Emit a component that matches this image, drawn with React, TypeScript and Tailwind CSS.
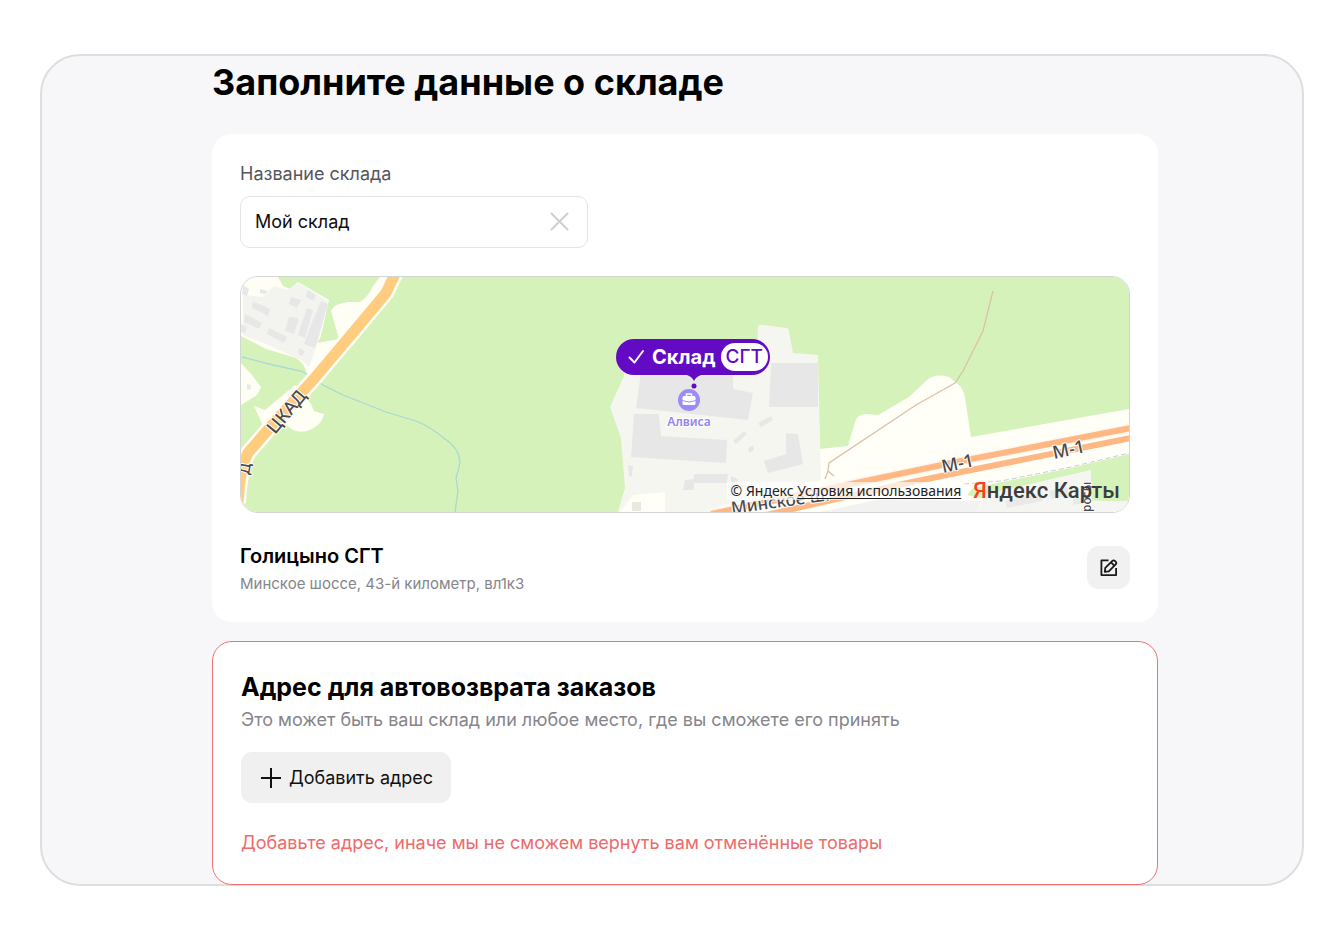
import { useState } from "react";

const roadLabel = "fill-[#4a4a4a] font-['Noto_Sans'] font-medium";

function MapTiles() {
  return (
    <svg
      aria-hidden
      viewBox="0 0 888 235"
      preserveAspectRatio="xMidYMid slice"
      className="block h-full w-full"
    >
      <rect width="888" height="235" fill="#d5f2ba" />

      {/* settlement in the north-west */}
      <path d="M0 0H37L42 9L49 12L57 5L88 23L80 60L76 66L98 62L90 34Q92 29 98 27L107 25H119Q127 20 132 9L139 0H154L76 104L66 99Q64 84 52 80L25 72L0 59Z" fill="#fefef5" />
      <path d="M90 34V60L79 63L88 24Z" fill="#d5f2ba" />
      <path d="M33 9L47 13L57 6L87 24L78 62L68 90L60 83L20 65L2 58V18L22 20Z" fill="#f3f4f0" />
      <g fill="#e7e7e7">
        <path d="M80 24L87 27L74 71L63 67L70 48Z" />
        <path d="M66 31L72 33L64 61L57 58Z" />
        <path d="M12 24L29 32L27 39L11 31Z" />
        <path d="M4 37L21 46L18 52L3 45Z" />
        <path d="M50 20L60 23L56 31L48 27Z" />
        <path d="M48 40L58 41L53 57L44 54Z" />
        <path d="M28 51L46 60L43 66L26 57Z" />
        <path d="M67 13L75 18L72 24L65 20Z" />
        <path d="M2 8L8 12L6 19L1 17Z" />
        <path d="M19 12L27 14L24 17L19 16Z" />
        <path d="M0 47L6 50L4 56L0 55Z" />
        <path d="M58 71L64 74L61 79L57 77Z" />
      </g>
      <path d="M0 86L11 98L20 110L16 118L0 128Z" fill="#fefef5" />
      <path d="M6 107L10 108L9 113L6 112Z" fill="#e7e7e7" />
      <path d="M13 129L24 133L54 108L70 127L73 134L83 137Q81 147 71 152Q62 157 52 153L38 143L22 149L18 140Z" fill="#fefef5" />

      {/* river */}
      <path d="M1 80L32 88L60 94L72 100L82 108L102 118L145 135L175 144Q190 150 204 162Q218 171 219 185Q218 192 215 201L217 214L214 235" fill="none" stroke="#a9d8d6" strokeWidth="1.3" />

      {/* ring road */}
      <path d="M154 -3L145 16L115 52L72 103L32 147L7 176Q-1 190 -3 226" fill="none" stroke="#fefef5" strokeWidth="16" />
      <path d="M154 -3L145 16L115 52L72 103L32 147L7 176Q-1 190 -3 226" fill="none" stroke="#ffcc80" strokeWidth="11" />

      {/* highway verge */}
      <path d="M578 172L607 169L614 145Q617 137 624 137L637 138L668 120L686 103Q695 96 708 100L719 109Q723 114 724 121L730 160L888 132V235H480L578 200Z" fill="#fffef7" />
      <path d="M888 177L830 191L732 211L726 218L744 222L870 224H888Z" fill="#d5f2ba" />
      <path d="M745 217L850 193V224H888V235H735Z" fill="#f5f6f2" />
      <path d="M764 224L800 217L802 224L766 231ZM808 214L826 210L828 218L810 222ZM832 222L848 219L848 225L832 228Z" fill="#e9eae8" />
      <path d="M580 235L640 222L740 224L735 235Z" fill="#f1f2f1" />

      {/* industrial zone */}
      <path d="M517 50Q518 47 523 48L545 51Q548 51 548 55L552 76L577 78L580 203L478 235H377L384 211L380 161L369 130L383 99V70H516Z" fill="#f6f6f0" />
      <g fill="#e7e7e7">
        <path d="M400 95H492V112L512 116L507 143L395 131Z" />
        <path d="M393 137H418L420 159L486 163L485 186L390 180Z" />
        <path d="M530 86H577V130H528Z" />
        <path d="M545 156L557 157L562 187L527 196L523 184L545 177Z" />
        <path d="M453 197H487L486 206H453V213H442L444 203L453 202Z" />
        <path d="M517 146L530 139L532 143L520 150Z" />
        <path d="M492 164L503 154L506 157L495 167Z" />
        <path d="M507 171L512 168L513 173L509 176Z" />
        <path d="M387 188L392 189L391 200L388 199Z" />
        <path d="M490 199L497 202L495 208L490 206Z" />
      </g>
      <path d="M392 218L424 215V235H379Z" fill="#fffef7" />
      <path d="M391 225H400V234H391Z" fill="#e9e9e0" />

      {/* M-1 carriageways */}
      <path d="M890 151L720 184L610 207L470 235" fill="none" stroke="#fff8ee" strokeWidth="9" />
      <path d="M890 151L720 184L610 207L470 237" fill="none" stroke="#ffb784" strokeWidth="6" />
      <path d="M890 161L720 195L657 208L525 238" fill="none" stroke="#ffb784" strokeWidth="6" />
      <path d="M723 207L760 204L830 190L888 176" fill="none" stroke="#c5cbe4" strokeWidth="1" strokeDasharray="5 3" />

      {/* footpath */}
      <path d="M752 14L742 54L722 94L714 106L675 128L588 186L587 194L584 202M587 194L593 199" fill="none" stroke="#dcc0a8" strokeWidth="1.3" />

      <g stroke="#ffffff" strokeWidth="2" paintOrder="stroke" strokeLinejoin="round">
        <text transform="translate(34 158) rotate(-50)" fontSize="18" className={roadLabel}>ЦКАД</text>
        <text transform="translate(8 198) rotate(-80)" fontSize="15" className={roadLabel}>Д</text>
        <text transform="translate(702 196) rotate(-12)" fontSize="18" className={roadLabel}>М-1</text>
        <text transform="translate(813 182) rotate(-12)" fontSize="18" className={roadLabel}>М-1</text>
        <text transform="translate(491 237) rotate(-8)" fontSize="17" className={roadLabel}>Минское ш.</text>
        <text transform="translate(850 235) rotate(-90)" fontSize="12" className={roadLabel}>росы</text>
      </g>

      {/* point of interest */}
      <circle cx="448" cy="123" r="11" fill="#9b8cf5" />
      <rect x="441.5" y="119" width="13" height="9" rx="1.5" fill="#fff" />
      <path d="M445.5 119V117H450.5V119" fill="none" stroke="#fff" strokeWidth="1.5" />
      <path d="M441 123.5L448 125L455 123.5" fill="none" stroke="#9b8cf5" strokeWidth="1" />
      <text x="448" y="149" textAnchor="middle" fontSize="12" stroke="#fff" strokeWidth="2" paintOrder="stroke" className="fill-[#9384f0] font-['Noto_Sans'] font-semibold">
        Алвиса
      </text>
    </svg>
  );
}

function WarehousePin() {
  return (
    <button
      type="button"
      className="absolute top-[62px] left-[calc(50%-69px)] flex h-9 items-center rounded-full bg-[#620ac4] pr-[2px] pl-3 text-white"
    >
      <svg aria-hidden viewBox="0 0 18 18" className="mr-[6px] h-[18px] w-[18px]" fill="none" stroke="currentColor" strokeWidth="2" strokeLinecap="round" strokeLinejoin="round">
        <path d="M1.5 9.5L6.5 14.5L15 3" />
      </svg>
      <span className="text-[20px] leading-7 font-bold">Склад</span>
      <span className="ml-[5px] rounded-full bg-white px-[5px] text-[19px] leading-7 font-medium text-[#620ac4]">
        СГТ
      </span>
      <svg aria-hidden viewBox="0 0 20 16" className="absolute top-[35px] left-[68px] h-4 w-5" fill="#620ac4">
        <path d="M0 0H20Q12 2 10 7Q8 2 0 0Z" />
        <circle cx="10" cy="12" r="2.5" />
      </svg>
    </button>
  );
}

function WarehouseMap() {
  return (
    <div className="relative h-[237px] overflow-hidden rounded-[18px] border border-[#d3d6d3]">
      <MapTiles />
      <WarehousePin />
      <div className="absolute right-[9px] bottom-[7px] flex items-center gap-2">
        <p className="bg-white/70 px-1 font-['Noto_Sans',sans-serif] text-[14px] leading-[18px] text-[#222]">
          © Яндекс{" "}
          <a href="#terms" className="underline underline-offset-2">
            Условия использования
          </a>
        </p>
        <a href="#maps" className="font-['Roboto',sans-serif] text-[22px] leading-7 font-medium text-[#3d3d3d]">
          <span className="text-[#fc3f1d]">Я</span>ндекс Карты
        </a>
      </div>
    </div>
  );
}

function WarehouseCard() {
  const [name, setName] = useState("Мой склад");

  return (
    <section className="rounded-[20px] bg-white px-7 pt-[26px] pb-6">
      <label htmlFor="warehouse-name" className="block text-[18px] leading-7 text-[#55555c]">
        Название склада
      </label>
      <div className="mt-2 flex h-[52px] max-w-[348px] items-center rounded-[10px] border border-[#e4e4e7] pr-4 pl-[14px]">
        <input
          id="warehouse-name"
          type="text"
          value={name}
          onChange={(e) => setName(e.target.value)}
          className="min-w-0 flex-1 text-[18px] leading-7 text-[#0d0d0f] outline-none"
        />
        <button type="button" aria-label="Очистить" onClick={() => setName("")} className="text-[#cfcfd2]">
          <svg viewBox="0 0 22 22" className="h-[22px] w-[22px]" fill="none" stroke="currentColor" strokeWidth="2" strokeLinecap="round">
            <path d="M2.5 2.5L18.5 18.5M18.5 2.5L2.5 18.5" />
          </svg>
        </button>
      </div>

      <div className="mt-7">
        <WarehouseMap />
      </div>

      <div className="mt-[29px] flex items-start justify-between">
        <div>
          <h2 className="text-[20px] leading-7 font-semibold text-black">Голицыно СГТ</h2>
          <p className="text-[15px] leading-7 text-[#85858b]">Минское шоссе, 43-й километр, вл1к3</p>
        </div>
        <button
          type="button"
          aria-label="Изменить склад"
          className="mt-1 flex h-[43px] w-[43px] items-center justify-center rounded-[12px] bg-[#f1f1f2] text-[#1a1a1a]"
        >
          <svg viewBox="0 0 18 18" className="h-[18px] w-[18px]" fill="none" stroke="currentColor" strokeWidth="1.8" strokeLinejoin="round">
            <path d="M8.5 1.4H1.4V16.1H16.1V9" />
            <path d="M4.8 12.9L5.3 8.9L12.4 1.8Q13.8 .8 15.4 2.3Q17 3.800 15.900 5.200L8.800 12.300Z" />
            <path d="M11 3.400L14.300 6.700" />
          </svg>
        </button>
      </div>
    </section>
  );
}

function ReturnAddressCard() {
  return (
    <section className="-mb-px mt-[19px] rounded-[20px] border border-[#ee7272] bg-white px-7 pt-[29px] pb-[27px]">
      <h2 className="text-[25px] leading-8 font-bold text-black">Адрес для автовозврата заказов</h2>
      <p className="mt-[3px] text-[18px] leading-7 text-[#85858b]">
        Это может быть ваш склад или любое место, где вы сможете его принять
      </p>
      <button
        type="button"
        className="mt-[18px] flex h-[51px] items-center gap-2 rounded-[11px] bg-[#f0f0f0] px-[18px] text-[18px] leading-7 text-[#111]"
      >
        <svg aria-hidden viewBox="0 0 22 22" className="h-[22px] w-[22px]" fill="none" stroke="currentColor" strokeWidth="2">
          <path d="M12 1V21M2 11H22" />
        </svg>
        Добавить адрес
      </button>
      <p role="alert" className="mt-[26px] text-[18px] leading-7 text-[#ef6a6a]">
        Добавьте адрес, иначе мы не сможем вернуть вам отменённые товары
      </p>
    </section>
  );
}

export default function App() {
  return (
    <div className="bg-white px-10 py-[54px] font-['Inter',sans-serif]">
      <main className="rounded-[40px] border-2 border-[#dedee0] bg-[#f7f7fa] pr-36 pl-[170px]">
        <h1 className="pt-[3px] text-[36px] leading-[46px] font-bold text-black">Заполните данные о складе</h1>
        <div className="mt-[29px]">
          <WarehouseCard />
          <ReturnAddressCard />
        </div>
      </main>
    </div>
  );
}
